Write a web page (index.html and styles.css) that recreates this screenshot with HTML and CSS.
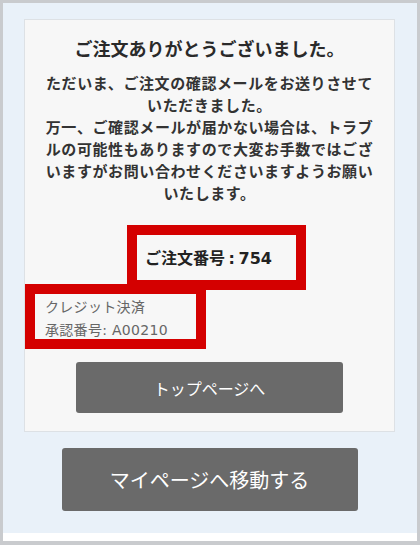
FILE: index.html
```html
<!DOCTYPE html>
<html lang="ja">
<head>
<meta charset="utf-8">
<title>ご注文完了</title>
<link rel="stylesheet" href="styles.css">
</head>
<body>
<div class="frame">
  <div class="page">
    <div class="card">
      <h1 class="title">ご注文ありがとうございました。</h1>
      <p class="message">ただいま、ご注文の確認メールをお送りさせていただきました。<br>万一、ご確認メールが届かない場合は、トラブルの可能性もありますので大変お手数ではございますがお問い合わせくださいますようお願いいたします。</p>
      <p class="order-no">ご注文番号 : 754</p>
      <div class="payment">
        <div>クレジット決済</div>
        <div>承認番号: A00210</div>
      </div>
      <div class="btn-row"><a class="btn btn-top">トップページへ</a></div>
    </div>
    <div class="btn-row"><a class="btn btn-mypage">マイページへ移動する</a></div>
  </div>
  <div class="bottom-strip"></div>
  <div class="mark mark-order"></div>
  <div class="mark mark-payment"></div>
</div>
</body>
</html>
```
FILE: styles.css
```css
html, body {
  margin: 0;
  padding: 0;
}
body {
  font-family: "DejaVu Sans", "Noto Sans CJK JP", sans-serif;
  background: #ffffff;
}
.frame {
  position: relative;
  width: 420px;
  height: 545px;
  box-sizing: border-box;
  border: 3px solid #c9cbce;
  border-bottom-width: 4px;
  background: #e9f1f9;
  display: flex;
  flex-direction: column;
}
.page {
  flex: 1;
  padding: 16px 22px 0 21px;
}
.card {
  background: #f7f7f7;
  border: 1px solid #dde1e5;
  padding: 17px 20px 18px;
}
.title {
  margin: 0;
  text-align: center;
  font-size: 18px;
  line-height: 26px;
  font-weight: bold;
  color: #2a2a2a;
}
.message {
  margin: 10px 0 0;
  text-align: center;
  font-size: 15px;
  letter-spacing: 0.6px;
  line-height: 22px;
  font-weight: bold;
  color: #333;
}
.order-no {
  margin: 42px 0 0;
  text-align: center;
  font-size: 16px;
  line-height: 24px;
  font-weight: bold;
  color: #222;
  word-spacing: -2px;
  padding-right: 2px;
}
.payment {
  margin-top: 25px;
  font-size: 14px;
  line-height: 23px;
  color: #666;
  letter-spacing: 0.3px;
}
.btn-row {
  display: flex;
  justify-content: center;
}
.btn {
  display: flex;
  align-items: center;
  justify-content: center;
  background: #6a6a6a;
  color: #fff;
  border-radius: 3px;
  text-decoration: none;
}
.btn-top {
  margin-top: 20px;
  width: 267px;
  height: 51px;
  font-size: 16px;
}
.btn-mypage {
  margin-top: 16px;
  width: 296px;
  height: 63px;
  font-size: 20px;
}
.bottom-strip {
  height: 8px;
  background: #ffffff;
}
.mark {
  position: absolute;
  border: 10px solid #d40000;
  box-sizing: border-box;
}
.mark-order {
  left: 124px;
  top: 222px;
  width: 179px;
  height: 65px;
}
.mark-payment {
  left: 22px;
  top: 281px;
  width: 181px;
  height: 65px;
}
```
